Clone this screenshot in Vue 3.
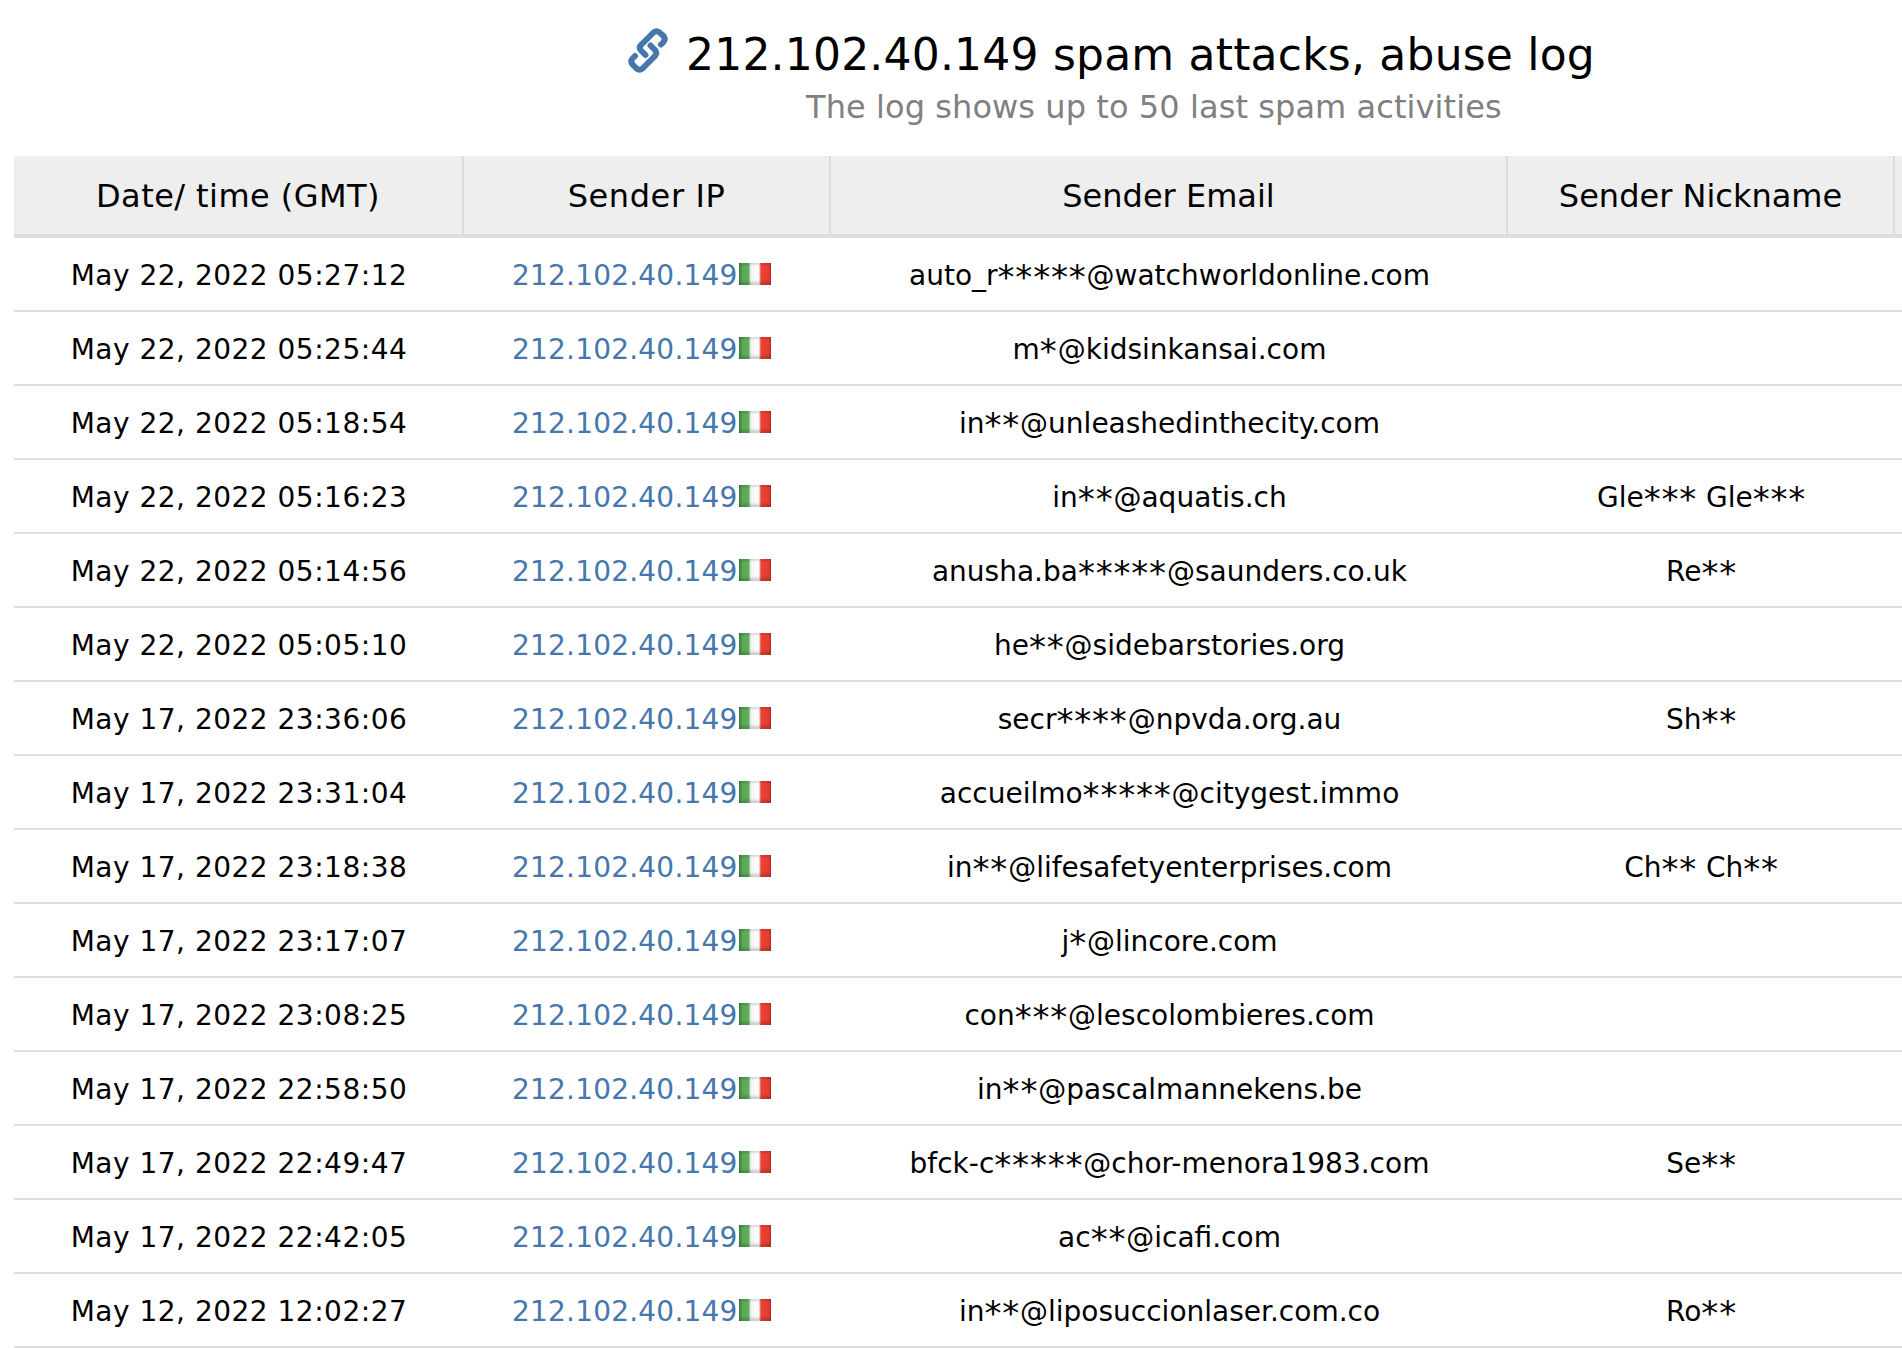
<script setup>
const ip = '212.102.40.149'
const rows = [
  ['May 22, 2022 05:27:12', 'auto_r*****@watchworldonline.com', ''],
  ['May 22, 2022 05:25:44', 'm*@kidsinkansai.com', ''],
  ['May 22, 2022 05:18:54', 'in**@unleashedinthecity.com', ''],
  ['May 22, 2022 05:16:23', 'in**@aquatis.ch', 'Gle*** Gle***'],
  ['May 22, 2022 05:14:56', 'anusha.ba*****@saunders.co.uk', 'Re**'],
  ['May 22, 2022 05:05:10', 'he**@sidebarstories.org', ''],
  ['May 17, 2022 23:36:06', 'secr****@npvda.org.au', 'Sh**'],
  ['May 17, 2022 23:31:04', 'accueilmo*****@citygest.immo', ''],
  ['May 17, 2022 23:18:38', 'in**@lifesafetyenterprises.com', 'Ch** Ch**'],
  ['May 17, 2022 23:17:07', 'j*@lincore.com', ''],
  ['May 17, 2022 23:08:25', 'con***@lescolombieres.com', ''],
  ['May 17, 2022 22:58:50', 'in**@pascalmannekens.be', ''],
  ['May 17, 2022 22:49:47', 'bfck-c*****@chor-menora1983.com', 'Se**'],
  ['May 17, 2022 22:42:05', 'ac**@icafi.com', ''],
  ['May 12, 2022 12:02:27', 'in**@liposuccionlaser.com.co', 'Ro**']
]
// the asterisks of the masked values are larger than the base font's, so they get their own size
const parts = (s) => s.split(/(\*+)/).filter(Boolean).map((t) => ({ t, star: t[0] === '*' }))
</script>

<template>
  <div class="page">
    <header class="head">
      <h1 class="title">
        <svg class="icon" viewBox="0 0 56 56" width="56" height="56" aria-hidden="true">
          <g fill="none" stroke="#4577ad" stroke-width="6" stroke-linecap="round" stroke-linejoin="round">
            <path d="M41 22.5 L43.5 20 Q46 17 43.5 14 L39.5 10.5 Q36.5 8 33.5 10.5 L21 23 Q18.5 26 21 28.5 L25.5 33" />
            <path d="M15 34 L12.5 36.5 Q10 39.5 12.5 42.5 L16.5 46.5 Q19.5 49 22.5 46.5 L35 34 Q37.5 31 35 28 L30.5 23.5" />
          </g>
        </svg>
        <span>212.102.40.149 spam attacks, abuse log</span>
      </h1>
      <p class="sub">The log shows up to 50 last spam activities</p>
    </header>
    <table class="log">
      <colgroup>
        <col class="c1" /><col class="c2" /><col class="c3" /><col class="c4" /><col class="c5" />
      </colgroup>
      <thead>
        <tr>
          <th>Date/ time (GMT)</th>
          <th>Sender IP</th>
          <th>Sender Email</th>
          <th>Sender Nickname</th>
          <th></th>
        </tr>
      </thead>
      <tbody>
        <tr v-for="r in rows" :key="r[0]">
          <td class="date">{{ r[0] }}</td>
          <td>
            <div class="ipcell">
              <a class="ip">{{ ip }}</a><span class="flag"></span>
            </div>
          </td>
          <td><span v-for="(p, i) in parts(r[1])" :key="i" :class="{ star: p.star }">{{ p.t }}</span></td>
          <td><span v-for="(p, i) in parts(r[2])" :key="i" :class="{ star: p.star }">{{ p.t }}</span></td>
          <td></td>
        </tr>
      </tbody>
    </table>
  </div>
</template>

<style>
html, body { margin: 0; background: #fff; overflow: hidden; }
</style>

<style scoped>
.page {
  width: 1902px;
  height: 1348px;
  overflow: hidden;
  font-family: "DejaVu Sans", Verdana, sans-serif;
  color: #000;
  background: #fff;
}
.head { height: 156px; padding-left: 14px; box-sizing: border-box; }
.title {
  margin: 0;
  padding-top: 27px;
  padding-left: 606px;
  display: flex;
  align-items: center;
  gap: 10px;
  font-size: 44px;
  font-weight: 400;
  line-height: 56px;
  letter-spacing: 0.2px;
}
.icon { flex: none; margin-top: -10px; }
.sub {
  margin: 6px 0 0;
  padding-left: 792px;
  font-size: 32px;
  line-height: 36px;
  letter-spacing: 0.08px;
  color: #808080;
}
.log {
  width: 1906px;
  margin-left: 14px;
  table-layout: fixed;
  border-collapse: separate;
  border-spacing: 0;
  font-size: 28px;
}
.c1 { width: 450px; }
.c2 { width: 367px; }
.c3 { width: 677px; }
.c4 { width: 387px; }
.log th {
  height: 76px;
  padding: 2px 0 0;
  background: #eee;
  border-right: 2px solid #ddd;
  border-bottom: 4px solid #ddd;
  font-weight: 400;
  font-size: 32px;
  text-align: center;
}
.log th:nth-child(1) { letter-spacing: 0.45px; }
.log th:nth-child(2) { letter-spacing: 0.6px; }
.log td {
  height: 69px;
  padding: 3px 0 0;
  border-bottom: 2px solid #ddd;
  text-align: center;
}
.date { letter-spacing: 0.5px; }
.star {
  font-size: 34px;
  line-height: 0;
  letter-spacing: 0.8px;
  vertical-align: -3.5px;
}
.ipcell { display: flex; justify-content: center; align-items: center; }
.ip { color: #4577ad; letter-spacing: 0.2px; }
.flag {
  width: 32px;
  height: 22px;
  margin: -3px 12.4px 0 1px;
  background: linear-gradient(90deg, #3f8a38 0, #5aa955 12%, #62ae5c 30%, #f4f4f4 37%, #ffffff 62%, #ea4234 69%, #e63e30 92%, #c8332a 100%);
  box-shadow: inset 0 2px 2px rgba(0, 0, 0, 0.12), inset 0 -3px 3px rgba(0, 0, 0, 0.18);
}
</style>
